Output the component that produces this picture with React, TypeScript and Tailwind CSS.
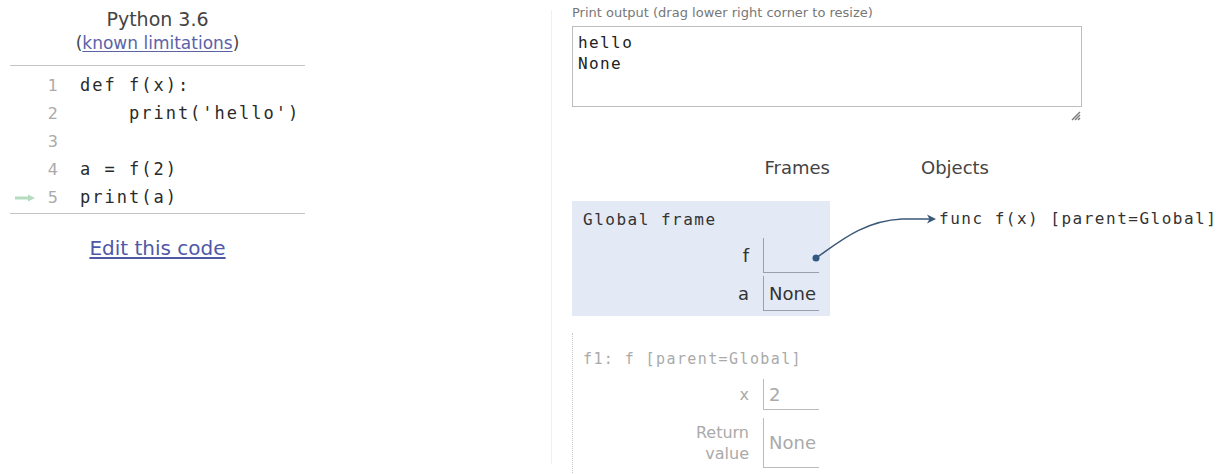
import React from 'react';

const sans = "font-['DejaVu_Sans',Verdana,sans-serif]";
const mono = "font-['DejaVu_Sans_Mono',monospace]";

const codeLines = [
  { n: 1, text: 'def f(x):' },
  { n: 2, text: "    print('hello')" },
  { n: 3, text: '' },
  { n: 4, text: 'a = f(2)' },
  { n: 5, text: 'print(a)', current: true },
];

function CodePanel() {
  return (
    <div className="w-[295px]">
      <div className={`${sans} text-center text-[#444] text-[19px] leading-[24px]`}>Python 3.6</div>
      <div className={`${sans} text-center text-[#444] text-[17px] leading-[24px]`}>
        (<span className="text-[#5b63a8] underline underline-offset-2">known limitations</span>)
      </div>
      <div className="mt-[10px] border-t border-[#c4c4c4] pt-[6px] pb-[1px] border-b">
        {codeLines.map((l) => (
          <div key={l.n} className="flex h-[28px] items-center">
            <div className="w-[30px] flex justify-center">
              {l.current && (
                <svg width="22" height="8" viewBox="0 0 22 8">
                  <path d="M1 4 H15" stroke="#b5dcc0" strokeWidth="3" />
                  <path d="M14 0.5 L21 4 L14 7.5 Z" fill="#b5dcc0" />
                </svg>
              )}
            </div>
            <div className={`${sans} w-[18px] text-right text-[#aaa] text-[16px]`}>{l.n}</div>
            <pre className={`${mono} ml-[22px] text-[17px] tracking-[2px] text-[#2a2a2a]`}>{l.text}</pre>
          </div>
        ))}
      </div>
      <div className={`${sans} mt-[21px] text-center text-[20px] leading-[26px]`}>
        <span className="text-[#4f58a8] underline underline-offset-2">Edit this code</span>
      </div>
    </div>
  );
}

function VarRow({ name, value, dim, tall }: { name: React.ReactNode; value?: string; dim?: boolean; tall?: boolean }) {
  const labelColor = dim ? 'text-[#aaa]' : 'text-[#333]';
  const border = dim ? 'border-[#bbb]' : 'border-[#9aa0a8]';
  return (
    <div className="flex justify-end items-center">
      <div className={`${sans} ${labelColor} text-right pr-[14px] ${dim ? 'text-[16px] leading-[21px]' : 'text-[18px]'}`}>
        {name}
      </div>
      <div
        className={`w-[56px] border-l border-b ${border} flex items-center pl-[5px] ${tall ? 'h-[50px]' : dim ? 'h-[31px]' : 'h-[35px]'}`}
      >
        {value && <span className={`${sans} ${labelColor} text-[18px]`}>{value}</span>}
      </div>
    </div>
  );
}

function Visualizer() {
  return (
    <div className="flex flex-col">
      <div className={`${sans} text-[13px] leading-[16px] text-[#777]`}>
        Print output (drag lower right corner to resize)
      </div>
      <div className="mt-[5px] w-[510px] h-[81px] border border-[#bdbdbd] pl-[5px] pt-[5px]">
        <pre className={`${mono} text-[16px] tracking-[1.4px] leading-[21px] text-[#222]`}>{'hello\nNone'}</pre>
      </div>
      <div className="w-[510px] flex justify-end pr-[1px] mt-[4px]">
        <svg width="10" height="10" viewBox="0 0 10 10">
          <path d="M9 1 L1 9 M9 4 L4 9 M9 7 L7 9" stroke="#777" strokeWidth="1.4" />
        </svg>
      </div>

      <div className={`${sans} flex mt-[35px] text-[18px] leading-[24px] text-[#444]`}>
        <div className="w-[258px] text-right">Frames</div>
        <div className="ml-[91px]">Objects</div>
      </div>

      <div className="relative flex mt-[21px]">
        <div className="w-[258px] flex flex-col">
          <div className="bg-[#e3e9f5] pt-[9px] pb-[5px] pr-[11px]">
            <div className={`${mono} pl-[11px] text-[16px] tracking-[1.5px] leading-[20px] text-[#333]`}>
              Global frame
            </div>
            <div className="mt-[8px] flex flex-col gap-[3px]">
              <VarRow name="f" />
              <VarRow name="a" value="None" />
            </div>
          </div>

          <div className="mt-[17px] border-l border-dotted border-[#c8c8c8] h-[140px] pt-[16px] pr-[11px]">
            <div className={`${mono} pl-[10px] text-[15px] tracking-[1.4px] leading-[20px] text-[#aaa]`}>
              f1: f [parent=Global]
            </div>
            <div className="mt-[10px] flex flex-col gap-[8px]">
              <VarRow name="x" value="2" dim />
              <VarRow
                name={
                  <>
                    Return
                    <br />
                    value
                  </>
                }
                value="None"
                dim
                tall
              />
            </div>
          </div>
        </div>

        <div className="pl-[109px] pt-[8px]">
          <div className={`${mono} text-[16px] tracking-[1.5px] leading-[20px] text-[#333] whitespace-nowrap`}>
            func f(x) [parent=Global]
          </div>
        </div>

        <svg className="absolute left-0 top-0 pointer-events-none" width="380" height="80" viewBox="0 0 380 80">
          <circle cx="244" cy="57" r="3.5" fill="#2f5a85" />
          <path d="M244 57 C 266 42, 290 20, 330 18 L 358 18" stroke="#3a5878" strokeWidth="1.5" fill="none" />
          <path d="M355 13.5 L364 18 L355 22.5 L357.5 18 Z" fill="#3a5878" />
        </svg>
      </div>
    </div>
  );
}

export default function App() {
  return (
    <div className="w-[1226px] h-[474px] bg-white flex overflow-hidden">
      <div className="w-[551px] pl-[10px] pt-[7px] flex">
        <CodePanel />
      </div>
      <div className="w-px my-[10px] bg-[#f0f0f0]" />
      <div className="pl-[20px] pt-[5px]">
        <Visualizer />
      </div>
    </div>
  );
}
